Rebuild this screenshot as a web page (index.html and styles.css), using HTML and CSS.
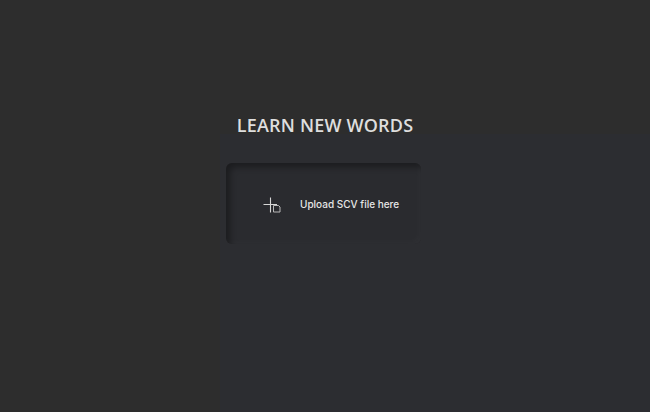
FILE: index.html
```html
<!DOCTYPE html>
<html lang="en">
<head>
<meta charset="utf-8">
<title>Learn new words</title>
<link rel="stylesheet" href="styles.css">
</head>
<body>
<div class="page">
  <h1 class="title">LEARN NEW WORDS</h1>
  <main class="panel">
    <label class="upload">
      <svg class="upload-icon" width="20" height="20" viewBox="0 0 20 20" aria-hidden="true">
        <path d="M7.5 3.5 V18.5 M0.5 10.5 H14" stroke="#d6d6d6" stroke-width="1.1" fill="none"/>
        <path d="M10.5 11.5 H15.5 L17 13 V18 H10.5 Z" stroke="#b8b8b8" stroke-width="1" fill="none"/>
      </svg>
      <span class="upload-text">Upload SCV file here</span>
    </label>
  </main>
</div>
</body>
</html>
```

FILE: styles.css
```css
html, body {
  margin: 0;
  height: 100%;
}
body {
  background: #2d2d2d;
  font-family: "Open Sans", "Liberation Sans", sans-serif;
  overflow: hidden;
}
.page {
  display: flex;
  flex-direction: column;
  height: 100%;
}
.title {
  margin: 0;
  padding-top: 113px;
  height: 21px;
  text-align: center;
  font-size: 18px;
  font-weight: 600;
  letter-spacing: 0.2px;
  line-height: 24px;
  color: #dedede;
}
.panel {
  flex: 1;
  margin-left: 220px;
  background: #2c2d31;
  padding-top: 29px;
}
.upload {
  display: flex;
  align-items: center;
  gap: 17px;
  width: 195px;
  height: 81px;
  margin-left: 6px;
  box-sizing: border-box;
  padding-left: 37px;
  border-radius: 6px;
  background: #2a2b2f;
  box-shadow: inset 4px 4px 6px rgba(0, 0, 0, 0.35), inset -3px -3px 5px rgba(255, 255, 255, 0.025);
  cursor: pointer;
}
.upload-icon {
  display: block;
}
.upload-text {
  font-family: Inter, "Open Sans", sans-serif;
  font-size: 10px;
  font-weight: 500;
  color: #e6e6e6;
  letter-spacing: 0;
}
```
